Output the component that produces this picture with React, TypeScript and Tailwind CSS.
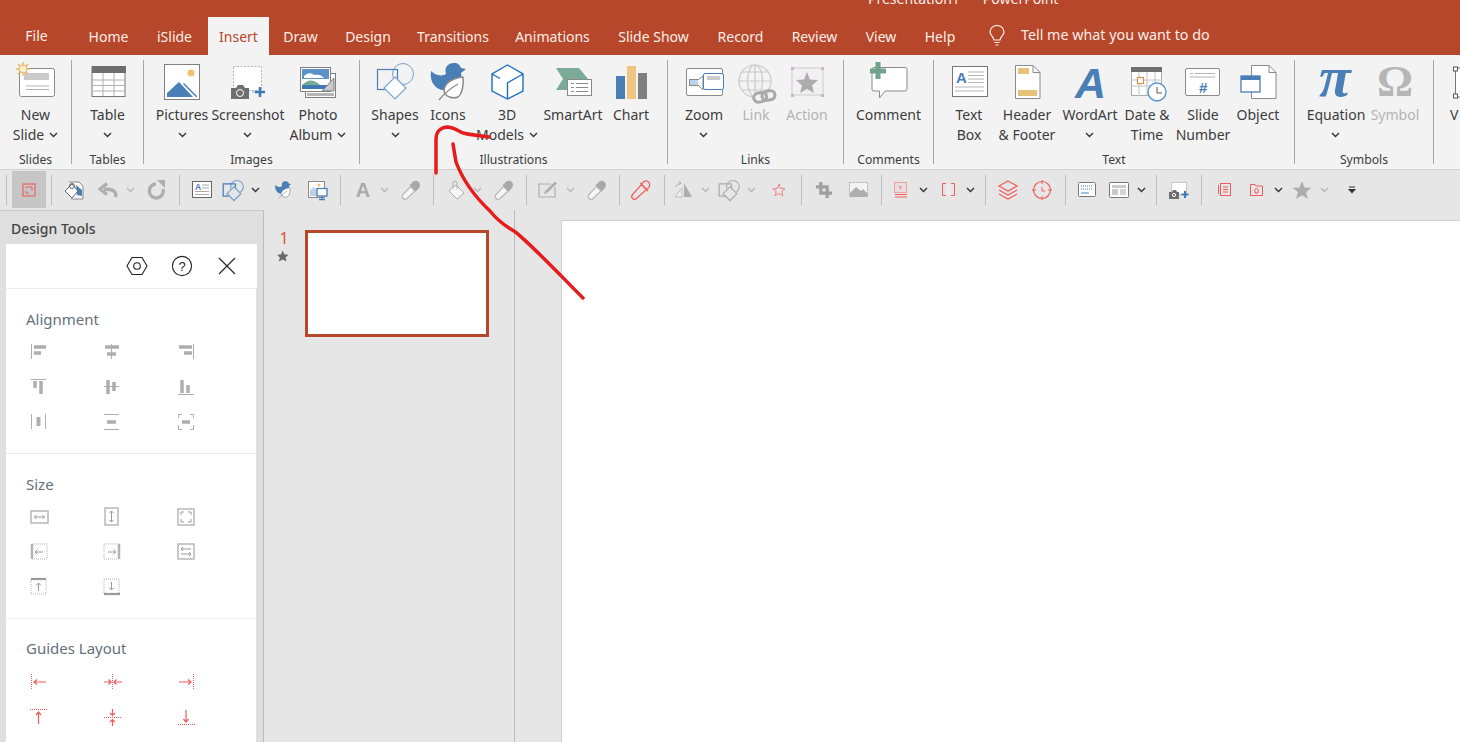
import type { ReactNode } from "react";

const FONT = "font-['Noto_Sans','Open_Sans',sans-serif]";
const BLUE = "#4a7eb7";
const GREY = "#8a8a8a";
const RED = "#f25b5b";
const LIGHT = "#aeaeae";

function Big({ children }: { children: ReactNode }) {
  return (
    <svg width="44" height="45" viewBox="0 0 44 45" className="block overflow-visible">
      {children}
    </svg>
  );
}

function Ic({ children }: { children: ReactNode }) {
  return (
    <svg width="20" height="20" viewBox="0 0 20 20" className="block overflow-visible">
      {children}
    </svg>
  );
}

function Sq({ children }: { children: ReactNode }) {
  return (
    <svg width="16" height="16" viewBox="0 0 16 16" className="block overflow-visible" fill="none">
      {children}
    </svg>
  );
}

function Chev({ dark = false }: { dark?: boolean }) {
  return (
    <svg width="9" height="6" viewBox="0 0 9 6" className="block">
      <path d="M1 1 L4.5 4.5 L8 1" fill="none" stroke={dark ? "#333" : "#b8b8b8"} strokeWidth="1.4" />
    </svg>
  );
}

const NewSlideIcon = () => (
  <Big>
    <rect x="5.5" y="8.5" width="35" height="28" rx="2" fill="#fff" stroke={GREY} />
    <rect x="10" y="13" width="25" height="7" fill="#cbcbcb" />
    <path d="M12 26 H35 M12 29.5 H35" stroke="#b5b5b5" />
    <path d="M9 2 V16 M2 9 H16 M4 4 L14 14 M14 4 L4 14" stroke="#eab75f" strokeWidth="1.3" />
    <circle cx="9" cy="9" r="4" fill="#fbeed0" stroke="#eab75f" />
  </Big>
);
const TableIcon = () => (
  <Big>
    <rect x="6" y="6.5" width="33" height="30" fill="#fff" stroke="#777" />
    <rect x="6" y="6" width="34" height="7" fill="#6e6e6e" />
    <path d="M6 20 H39 M6 25.5 H39 M6 31 H39 M17 13 V36 M28 13 V36" stroke="#b0b0b0" />
  </Big>
);
const PicturesIcon = () => (
  <Big>
    <rect x="4.5" y="4.5" width="35" height="35" fill="#fff" stroke="#808080" />
    <circle cx="31" cy="13" r="3.5" fill="#eec272" />
    <path d="M7 37 V33 L19 22 L33 37 Z M24 23 L37 36 V37 L36 37 L23 24 Z" fill={BLUE} />
  </Big>
);
const ScreenshotIcon = () => (
  <Big>
    <rect x="7.5" y="6.5" width="28" height="24" fill="#fff" stroke="#b5b5b5" strokeDasharray="2 1.5" />
    <path d="M5 28 H10 L12 25 H17 L19 28 H23 V39 H5 Z" fill="#6f6f6f" />
    <circle cx="14" cy="33" r="3.5" fill="#6f6f6f" stroke="#fff" />
    <path d="M26 32 H30" stroke="#9ab6d4" />
    <path d="M34 27 V37 M29 32 H39" stroke="#3f78b5" strokeWidth="2.6" />
  </Big>
);
const PhotoIcon = () => (
  <Big>
    <rect x="9.5" y="13.5" width="30" height="24" fill="#fff" stroke="#808080" />
    <rect x="11" y="33" width="27" height="3" fill="#b5b5b5" />
    <rect x="4.5" y="7.5" width="30" height="24" fill="#fff" stroke="#808080" />
    <rect x="6" y="9" width="27" height="10" fill="#5b93c9" />
    <path d="M8 16 C12 12 16 13 18 15 C22 14 26 15 28 18 H8 Z" fill="#fff" />
    <path d="M6 25 C12 19 18 19 24 25 Z" fill="#7aab98" />
    <rect x="6" y="25" width="27" height="4" fill="#3f78b5" />
    <path d="M26 31 L38 18 V31 Z" fill="#c8c8c8" stroke="#808080" />
  </Big>
);
function ShapesShape({ c, d }: { c: string; d: string }) {
  return (
    <>
      <circle cx="30" cy="14" r="10.5" fill="none" stroke={d} />
      <rect x="4.5" y="9.5" width="20" height="20" fill="#fff" fillOpacity="0.01" stroke={c} strokeWidth="1.2" />
      <path d="M22 17 L33 28 L22 39 L11 28 Z" fill="#fff" stroke={d} strokeWidth="1.2" />
    </>
  );
}
const ShapesIcon = () => (
  <Big>
    <ShapesShape c={BLUE} d="#7ba3cd" />
  </Big>
);
const BirdLeaf = () => (
  <g>
    <path d="M5 11 C9 15 15 17 20 14 C18 7 22 3 28 3 C32 3 34 5 35 8 L40 9 L35 13 C37 19 30 27 22 30 C12 32 3 24 5 11Z" fill={BLUE} />
    <path d="M37 17 C27 18 18 23 18 31 C19 37 27 39 32 37 C36 34 38 25 37 17Z" fill="#fff" stroke={GREY} strokeWidth="1.5" />
    <path d="M13 40 C18 34 25 28 32 24" fill="none" stroke={GREY} strokeWidth="1.3" />
  </g>
);
const IconsIcon = () => (
  <Big>
    <BirdLeaf />
  </Big>
);
const CubeIcon = () => (
  <Big>
    <path d="M22.5 5 L38 14 V31 L22.5 39 L7 31 V14 Z M7 14 L15 18.5 M22 23 L38 14 M22.5 23 V39" fill="#fff" stroke="#1f6fc0" strokeWidth="1.4" />
  </Big>
);
const SmartArtIcon = () => (
  <Big>
    <path d="M5 8 H28 L37 19 L28 30 H5 L12 19 Z" fill="#7aab98" />
    <rect x="16.5" y="19.5" width="24" height="16" fill="#fff" stroke={GREY} />
    <path d="M20 23.5 H23 M25 23.5 H37 M20 27.5 H23 M25 27.5 H37 M20 31.5 H23 M25 31.5 H37" stroke={GREY} />
  </Big>
);
const ChartIcon = () => (
  <Big>
    <rect x="7" y="16" width="9" height="23" fill={BLUE} />
    <rect x="18" y="6" width="9" height="33" fill="#eec67f" />
    <rect x="29" y="13" width="9" height="26" fill="#7f7f7f" />
  </Big>
);
const ZoomIcon = () => (
  <Big>
    <rect x="4.5" y="8.5" width="36" height="27" rx="1.5" fill="#fff" stroke={GREY} />
    <rect x="7.5" y="19.5" width="9" height="6" fill="#bcd4ea" stroke={GREY} />
    <path d="M16 20 L21 16 V30 L16 25" fill="#fff" stroke={GREY} />
    <rect x="21.5" y="13.5" width="20" height="16" rx="1.5" fill="#fff" stroke={BLUE} />
    <rect x="25" y="16" width="13" height="4" fill="#cbcbcb" />
  </Big>
);
const LinkIcon = () => (
  <Big>
    <g fill="none" stroke="#c9c9c9" strokeWidth="1.2">
      <circle cx="21" cy="21" r="16" />
      <ellipse cx="21" cy="21" rx="7.5" ry="16" />
      <path d="M21 5 V37 M5 21 H37 M8 12 H34 M8 30 H34" />
    </g>
    <g transform="rotate(-12 30 36)" fill="#f3f3f3" stroke="#a9a9a9" strokeWidth="3">
      <rect x="19.5" y="32" width="13" height="9" rx="4.5" />
      <rect x="28" y="32" width="13" height="9" rx="4.5" fill="none" />
    </g>
  </Big>
);
const StarPath = "M21 12 L24 19.5 L32 20 L26 25.5 L28 33 L21 29 L14 33 L16 25.5 L10 20 L18 19.5 Z";
const ActionIcon = () => (
  <Big>
    <rect x="7" y="8" width="31" height="27" fill="#f3f0f3" stroke="#cfc8cf" />
    <path d={StarPath} fill="#adadad" transform="translate(1 0)" />
    <path d="M6 7 h3 v3 h-3z M36 7 h3 v3 h-3z M6 34 h3 v3 h-3z M36 34 h3 v3 h-3z" fill="#bdbdbd" />
  </Big>
);
const CommentIcon = () => (
  <Big>
    <path d="M7 7.5 H38 a2 2 0 0 1 2 2 V29 a2 2 0 0 1 -2 2 H18 L12.5 38 V31 H7 a2 2 0 0 1 -2 -2 V9.5 a2 2 0 0 1 2 -2 Z" fill="#fff" stroke={GREY} />
    <path d="M11 2 V19 M3 11 H19" stroke="#6fa38f" strokeWidth="5" />
  </Big>
);
const TextBoxIcon = () => (
  <Big>
    <rect x="5.5" y="6.5" width="35" height="30" fill="#fff" stroke="#777" />
    <text x="9" y="23" fontSize="15" fontWeight="700" fill={BLUE} fontFamily="'Liberation Sans',sans-serif">A</text>
    <path d="M21 12 H37 M21 15.5 H37 M21 19 H37 M21 22.5 H37 M8 27 H37 M8 31 H37" stroke="#b5b5b5" />
  </Big>
);
const HeaderIcon = () => (
  <Big>
    <path d="M10.5 5.5 H28 L35 12.5 V38.5 H10.5 Z" fill="#fff" stroke={GREY} />
    <path d="M28 5.5 V12.5 H35" fill="none" stroke={GREY} />
    <rect x="13" y="8" width="11" height="6" fill="#e9c27a" />
    <rect x="13" y="30" width="19" height="6" fill="#e9c27a" />
  </Big>
);
const WordArtIcon = () => (
  <Big>
    <text x="7" y="38" fontSize="43" fontWeight="700" fontStyle="italic" fill={BLUE} fontFamily="'Liberation Sans',sans-serif">A</text>
  </Big>
);
const DateIcon = () => (
  <Big>
    <rect x="6.5" y="7.5" width="30" height="28" fill="#fff" stroke="#aaa" />
    <rect x="6" y="7" width="31" height="5" fill="#6e6e6e" />
    <path d="M6 20 H37 M6 26 H37 M14 12 V36 M22 12 V36 M30 12 V36" stroke="#c0c0c0" />
    <rect x="12.5" y="17.5" width="6" height="6" fill="#fff" stroke="#d68f4f" strokeWidth="1.2" />
    <circle cx="32" cy="32" r="9" fill="#fff" stroke="#5a93cc" strokeWidth="1.4" />
    <path d="M32 27 V33 H37" fill="none" stroke="#555" />
  </Big>
);
const SlideNumIcon = () => (
  <Big>
    <rect x="4.5" y="8.5" width="34" height="27" rx="1.5" fill="#fff" stroke={GREY} />
    <path d="M9 13.5 H12 M14 13.5 H34 M9 17 H34" stroke="#b5b5b5" />
    <text x="18" y="33" fontSize="15" fontWeight="700" fill={BLUE} fontFamily="'Liberation Sans',sans-serif">#</text>
  </Big>
);
const ObjectIcon = () => (
  <Big>
    <path d="M15.5 5.5 H33 L40 12.5 V38.5 H15.5 Z" fill="#fff" stroke={GREY} />
    <path d="M33 5.5 V12.5 H40" fill="none" stroke={GREY} />
    <rect x="5" y="16" width="19" height="16" fill="#fff" stroke={BLUE} strokeWidth="1.3" />
    <rect x="5" y="16" width="19" height="4" fill={BLUE} />
  </Big>
);
const PiIcon = () => (
  <Big>
    <text x="5" y="36" fontSize="58" fontWeight="700" fontStyle="italic" fill={BLUE} fontFamily="'Liberation Serif',serif">π</text>
  </Big>
);
const OmegaIcon = () => (
  <Big>
    <text x="4" y="36" fontSize="45" fontWeight="700" fill="#b6b6b6" fontFamily="'Liberation Serif',serif">Ω</text>
  </Big>
);
const VideoIcon = () => (
  <Big>
    <rect x="22.5" y="8" width="30" height="29" fill="#fff" stroke="#777" />
    <rect x="20.5" y="7" width="4" height="4" fill="#fff" stroke="#555" />
    <rect x="20.5" y="34" width="4" height="4" fill="#fff" stroke="#555" />
  </Big>
);

type Btn = {
  w: string;
  icon: ReactNode;
  lines: string[];
  chev?: "inline" | "below";
  off?: boolean;
};

function RibbonBtn({ w, icon, lines, chev, off }: Btn) {
  return (
    <div className={`${w} flex shrink-0 flex-col items-center`}>
      <div className="flex h-[45px] justify-center">{icon}</div>
      <div className={`flex flex-col items-center whitespace-nowrap text-[14px] leading-5 ${off ? "text-[#b4b4b4]" : "text-[#3c3c3c]"}`}>
        {lines.map((l, i) => (
          <div key={l} className="flex h-5 items-center gap-[5px]">
            {l}
            {chev === "inline" && i === lines.length - 1 && <Chev dark />}
          </div>
        ))}
        {chev === "below" && (
          <div className="flex h-5 items-center">
            <Chev dark />
          </div>
        )}
      </div>
    </div>
  );
}

function Group({ label, w, pad, items }: { label: string; w: string; pad: string; items: Btn[] }) {
  return (
    <>
      <div className={`${w} flex shrink-0 flex-col pt-[5px]`}>
        <div className={`flex h-[91px] ${pad}`}>
          {items.map((b) => (
            <RibbonBtn key={b.lines.join()} {...b} />
          ))}
        </div>
        <div className="h-[18px] whitespace-nowrap text-center text-[12.2px] leading-[18px] text-[#3c3c3c]">{label}</div>
      </div>
      <div className="h-[104px] w-px shrink-0 self-center bg-[#a6a6a6]" />
    </>
  );
}

function Ribbon() {
  return (
    <div className="flex h-[114px] bg-[#f3f3f3]">
      <Group label="Slides" w="w-[71px]" pad="" items={[{ w: "w-[71px]", icon: <NewSlideIcon />, lines: ["New", "Slide"], chev: "inline" }]} />
      <Group label="Tables" w="w-[71px]" pad="" items={[{ w: "w-[71px]", icon: <TableIcon />, lines: ["Table"], chev: "below" }]} />
      <Group
        label="Images"
        w="w-[215px]"
        pad="pl-[11px]"
        items={[
          { w: "w-[54px]", icon: <PicturesIcon />, lines: ["Pictures"], chev: "below" },
          { w: "w-[78px]", icon: <ScreenshotIcon />, lines: ["Screenshot"], chev: "below" },
          { w: "w-[62px]", icon: <PhotoIcon />, lines: ["Photo", "Album"], chev: "inline" },
        ]}
      />
      <Group
        label="Illustrations"
        w="w-[307px]"
        pad="pl-[11px]"
        items={[
          { w: "w-[48px]", icon: <ShapesIcon />, lines: ["Shapes"], chev: "below" },
          { w: "w-[58px]", icon: <IconsIcon />, lines: ["Icons"] },
          { w: "w-[60px]", icon: <CubeIcon />, lines: ["3D", "Models"], chev: "inline" },
          { w: "w-[72px]", icon: <SmartArtIcon />, lines: ["SmartArt"] },
          { w: "w-[44px]", icon: <ChartIcon />, lines: ["Chart"] },
        ]}
      />
      <Group
        label="Links"
        w="w-[175px]"
        pad="pl-[12px]"
        items={[
          { w: "w-[48px]", icon: <ZoomIcon />, lines: ["Zoom"], chev: "below" },
          { w: "w-[56px]", icon: <LinkIcon />, lines: ["Link"], off: true },
          { w: "w-[46px]", icon: <ActionIcon />, lines: ["Action"], off: true },
        ]}
      />
      <Group label="Comments" w="w-[89px]" pad="" items={[{ w: "w-[89px]", icon: <CommentIcon />, lines: ["Comment"] }]} />
      <Group
        label="Text"
        w="w-[360px]"
        pad="pl-[11px]"
        items={[
          { w: "w-[48px]", icon: <TextBoxIcon />, lines: ["Text", "Box"] },
          { w: "w-[68px]", icon: <HeaderIcon />, lines: ["Header", "& Footer"] },
          { w: "w-[58px]", icon: <WordArtIcon />, lines: ["WordArt"], chev: "below" },
          { w: "w-[56px]", icon: <DateIcon />, lines: ["Date &", "Time"] },
          { w: "w-[56px]", icon: <SlideNumIcon />, lines: ["Slide", "Number"] },
          { w: "w-[54px]", icon: <ObjectIcon />, lines: ["Object"] },
        ]}
      />
      <Group
        label="Symbols"
        w="w-[138px]"
        pad="pl-[11px]"
        items={[
          { w: "w-[60px]", icon: <PiIcon />, lines: ["Equation"], chev: "below" },
          { w: "w-[58px]", icon: <OmegaIcon />, lines: ["Symbol"], off: true },
        ]}
      />
      <div className="flex-1 overflow-hidden pt-[5px]">
        <div className="ml-[-1px] flex w-[60px] flex-col items-start">
          <div className="h-[45px]">
            <VideoIcon />
          </div>
          <div className="ml-[17px] text-[14px] leading-5 text-[#3c3c3c]">V</div>
        </div>
      </div>
    </div>
  );
}

const Dropper = ({ c = LIGHT }: { c?: string }) =>
  c === LIGHT ? (
    <Ic>
      <path d="M9.5 6.5 L14 11 L5.5 19 C4.5 19.5 3 19.5 2 18.5 C1 17.5 1 16 1.5 15 Z" fill="#f6f6f6" stroke="#b4b4b4" strokeWidth="1.1" />
      <path d="M8.5 5 L10.5 3.5 C12 .8 15 -.2 17.5 1.7 C20 4 19 7.5 16.5 9.5 L15 11.5 Z" fill="#a8a8a8" />
    </Ic>
  ) : (
    <Ic>
      <path d="M10.5 4.5 L15.5 9.5 L6 18 C4.5 19.5 2.5 19.5 1.5 18.5 C.5 17.5 .5 15.5 2 14 Z" fill="none" stroke={RED} strokeWidth="1.2" />
      <path d="M11 4 C12 .8 15.5 0 17.5 2 C19.5 4 19 7.5 16 9 M9 3 L17 11" fill="none" stroke={RED} strokeWidth="1.2" />
    </Ic>
  );
const ShapesSmall = ({ c, d }: { c: string; d: string }) => (
  <svg width="22" height="22" viewBox="0 0 44 45" className="block overflow-visible">
    <circle cx="30" cy="16" r="13" fill="none" stroke={d} strokeWidth="2.4" />
    <rect x="2" y="10" width="25" height="25" fill="none" stroke={c} strokeWidth="2.6" />
    <path d="M24 16 L38 30 L24 44 L10 30 Z" fill="#e6e6e6" stroke={d} strokeWidth="2.6" />
  </svg>
);
const StarSolid = () => (
  <svg width="20" height="20" viewBox="0 0 20 20" className="block">
    <path d="M10 1 L12.5 7.5 L19.5 7.8 L14 12.2 L16 19 L10 15.2 L4 19 L6 12.2 L.5 7.8 L7.5 7.5 Z" fill="#adadad" />
  </svg>
);

function Sep() {
  return <div className="h-[30px] w-px shrink-0 self-center bg-[#bdbdbd]" />;
}

function Slot({ w, children }: { w: string; children: ReactNode }) {
  return <div className={`${w} flex h-full shrink-0 items-center justify-center`}>{children}</div>;
}

function Toolbar() {
  return (
    <div className="flex h-[41px] items-stretch border-t border-[#d2d2d2] bg-[#e6e6e6] pl-[6px] pb-px">
      <Sep />
      <div className="mx-[5px] my-[1px] flex w-[34px] shrink-0 items-center justify-center bg-[#c6c6c6]">
        <Ic>
          <rect x="4" y="4" width="12" height="12" fill="none" stroke={RED} strokeWidth="1.1" />
          <path d="M7 8 V7 H13 V11 M7 11 V13 H10" fill="none" stroke={RED} />
        </Ic>
      </div>
      <Sep />
      <Slot w="w-[44px]">
        <Ic>
          <path d="M5 2 H15 L19 6 V19 H7" fill="#f7f7f7" stroke={GREY} />
          <path d="M12 5 L18 10 V16 L13 15 Z" fill={BLUE} />
          <path d="M8 4 L14 11 L8 18 L1 11 Z" fill="#fff" stroke="#666" />
          <circle cx="8" cy="6" r="2.5" fill="none" stroke="#666" />
        </Ic>
      </Slot>
      <Slot w="w-[26px]">
        <Ic>
          <path d="M16.5 17 C18 11 13 9 5 9" fill="none" stroke={LIGHT} strokeWidth="3.4" />
          <path d="M8 3.5 L1 9 L8 14.5" fill="none" stroke={LIGHT} strokeWidth="3.2" />
        </Ic>
      </Slot>
      <Slot w="w-[16px]">
        <Chev />
      </Slot>
      <Slot w="w-[38px] mr-[3px]">
        <Ic>
          <path d="M9 4 A7 7 0 1 0 16 9" fill="none" stroke={LIGHT} strokeWidth="3.4" />
          <path d="M10 0 H18 V8 Z" fill={LIGHT} />
        </Ic>
      </Slot>
      <Sep />
      <Slot w="w-[43px]">
        <Ic>
          <rect x=".5" y="1.5" width="19" height="16" fill="#fff" stroke="#666" />
          <text x="3" y="10" fontSize="8.5" fontWeight="700" fill={BLUE} fontFamily="'Liberation Sans',sans-serif">A</text>
          <path d="M10 5 H17 M10 8 H17 M3 11.5 H17 M3 14.5 H17" stroke="#aaa" />
        </Ic>
      </Slot>
      <Slot w="w-[20px]">
        <ShapesSmall c={BLUE} d="#7ba3cd" />
      </Slot>
      <Slot w="w-[24px]">
        <Chev dark />
      </Slot>
      <Slot w="w-[32px]">
        <svg width="20" height="20" viewBox="0 0 44 44" className="block overflow-visible">
          <BirdLeaf />
        </svg>
      </Slot>
      <Slot w="w-[38px] mr-[3px]">
        <Ic>
          <rect x=".5" y="1.5" width="16" height="16" fill="#fff" stroke={GREY} />
          <circle cx="11" cy="5" r="1.5" fill="#eec272" />
          <path d="M2 16 V10 L6 7 L11 13 V16 Z" fill="#bcd0e5" />
          <rect x="9" y="8.5" width="10" height="7.5" fill="#fff" stroke={BLUE} strokeWidth="1.3" />
          <path d="M14 16 V19 M11 19.5 H17" stroke={BLUE} strokeWidth="1.3" />
        </Ic>
      </Slot>
      <Sep />
      <Slot w="ml-[12px] w-[20px]">
        <span className="font-['Liberation_Sans',sans-serif] text-[20px] font-bold leading-none text-[#a9a9a9]">A</span>
      </Slot>
      <Slot w="w-[22px]">
        <Chev />
      </Slot>
      <Slot w="w-[32px] mr-[6px]">
        <Dropper />
      </Slot>
      <Sep />
      <Slot w="ml-[14px] w-[18px]">
        <Ic>
          <path d="M9 5 L17 13 L10 19 L2 11 Z" fill="#f7f7f7" stroke={LIGHT} />
          <path d="M6 8 V3 A2 2 0 0 1 10 3 V9" fill="none" stroke={LIGHT} />
        </Ic>
      </Slot>
      <Slot w="w-[22px]">
        <Chev />
      </Slot>
      <Slot w="w-[32px] mr-[6px]">
        <Dropper />
      </Slot>
      <Sep />
      <Slot w="ml-[12px] w-[18px]">
        <Ic>
          <path d="M17 7 V17 H1 V4 H13" fill="none" stroke={LIGHT} strokeWidth="1.2" />
          <path d="M6 14 L7 11 L17 1.5 L19 3.5 L9 13 Z" fill={LIGHT} />
        </Ic>
      </Slot>
      <Slot w="w-[26px]">
        <Chev />
      </Slot>
      <Slot w="w-[28px] mr-[8px]">
        <Dropper />
      </Slot>
      <Sep />
      <Slot w="w-[42px] mr-[2px]">
        <Dropper c={RED} />
      </Slot>
      <Sep />
      <Slot w="ml-[10px] w-[18px]">
        <Ic>
          <path d="M10 3 L18 17 H10 Z" fill={LIGHT} />
          <path d="M8 8 L1 17 H8 Z" fill="#f0f0f0" stroke="#c0c0c0" />
          <path d="M2 7 C3 4 5 3 7 3 M5 1 L7 3 L5 5" fill="none" stroke="#b0b0b0" />
        </Ic>
      </Slot>
      <Slot w="w-[24px]">
        <Chev />
      </Slot>
      <Slot w="w-[24px]">
        <ShapesSmall c={LIGHT} d={LIGHT} />
      </Slot>
      <Slot w="w-[20px]">
        <Chev />
      </Slot>
      <Slot w="w-[36px] mr-[4px]">
        <svg width="14" height="14" viewBox="0 0 20 20" className="block">
          <path d="M10 2 L12.5 8 L18.5 8.2 L14 12.2 L15.5 18 L10 15 L4.5 18 L6 12.2 L1.5 8.2 L7.5 8 Z" fill="none" stroke={RED} strokeWidth="1.4" strokeDasharray="3 1" />
        </svg>
      </Slot>
      <Sep />
      <Slot w="w-[44px]">
        <svg width="18" height="18" viewBox="0 0 20 20" className="block">
          <path d="M6.5 1 V13.5 H19 M1 6.5 H13.5 V19" fill="none" stroke="#a0a0a0" strokeWidth="3.6" />
        </svg>
      </Slot>
      <Slot w="w-[26px] mr-[9px]">
        <Ic>
          <rect x=".5" y="2.5" width="18" height="14" fill="#f4f4f4" stroke={LIGHT} strokeDasharray="2 1" />
          <path d="M1 17 V13 L7 7 L12 11 L14 9 L19 14 V17 Z" fill={LIGHT} />
        </Ic>
      </Slot>
      <Sep />
      <Slot w="ml-[12px] w-[14px]">
        <svg width="14" height="16" viewBox="0 0 14 16" className="block">
          <rect x=".5" y=".5" width="12" height="10" fill="#e9dede" stroke="#eda0a0" />
          <path d="M5 4 L7 5.5 L6 7 M1 15 H13" fill="none" stroke={RED} />
          <path d="M1 12.5 H13" stroke={RED} />
        </svg>
      </Slot>
      <Slot w="w-[30px]">
        <Chev dark />
      </Slot>
      <Slot w="w-[20px]">
        <svg width="13" height="13" viewBox="0 0 13 13" className="block">
          <rect x="4" y="1" width="5" height="11" fill="#ececec" />
          <path d="M4 .5 H.5 V12.5 H4 M9 .5 H12.5 V12.5 H9" fill="none" stroke={RED} />
        </svg>
      </Slot>
      <Slot w="w-[24px] mr-[3px]">
        <Chev dark />
      </Slot>
      <Sep />
      <Slot w="w-[44px]">
        <Ic>
          <path d="M10 1 L19 6 L10 11 L1 6 Z M1 10 L10 15 L19 10 M1 14 L10 19 L19 14" fill="none" stroke={RED} strokeWidth="1.2" />
        </Ic>
      </Slot>
      <Slot w="w-[24px] mr-[11px]">
        <Ic>
          <circle cx="10" cy="10" r="8.5" fill="none" stroke={RED} strokeWidth="1.2" />
          <path d="M10 0 V4 M10 16 V20 M0 10 H4 M16 10 H20 M10 7 V11 H13" fill="none" stroke={RED} />
        </Ic>
      </Slot>
      <Sep />
      <Slot w="w-[43px]">
        <Ic>
          <rect x=".5" y="2.5" width="17" height="14" rx="1" fill="#fff" stroke="#777" />
          <path d="M3 6 H15 M3 9 H15" stroke={BLUE} strokeDasharray="1 1" />
          <path d="M3 13 H11" stroke={BLUE} />
        </Ic>
      </Slot>
      <Slot w="w-[20px]">
        <Ic>
          <rect x=".5" y="2.5" width="19" height="15" rx="1" fill="#fff" stroke="#777" />
          <rect x="3" y="5" width="14" height="3" fill="#cbcbcb" />
          <rect x="3" y="9" width="6" height="6" fill="#cbcbcb" />
          <path d="M11 10 H17 M11 12 H17 M11 14 H17" stroke="#aaa" />
        </Ic>
      </Slot>
      <Slot w="w-[24px] mr-[3px]">
        <Chev dark />
      </Slot>
      <Sep />
      <Slot w="w-[44px]">
        <Ic>
          <rect x="2.5" y="2.5" width="15" height="12" fill="#fff" stroke="#999" strokeDasharray="1 1" />
          <path d="M0 12 H3 L4 10 H7 L8 12 H10 V19 H0 Z" fill="#6f6f6f" />
          <circle cx="5" cy="15" r="1.6" fill="#6f6f6f" stroke="#fff" />
          <path d="M16 11 V18 M12.5 14.5 H19.5" stroke="#3f78b5" strokeWidth="2" />
        </Ic>
      </Slot>
      <Sep />
      <Slot w="w-[44px]">
        <svg width="13" height="13" viewBox="0 0 13 13" className="block overflow-visible">
          <rect x="2.5" y=".5" width="10" height="12" fill="none" stroke={RED} />
          <path d="M.5 2 V11 M5 4 H10 M5 6.5 H10 M5 9 H10" stroke={RED} />
        </svg>
      </Slot>
      <Slot w="w-[20px]">
        <svg width="13" height="13" viewBox="0 0 13 13" className="block">
          <path d="M.5 1.5 H5 L6 3 H12.5 V12.5 H.5 Z" fill="none" stroke={RED} />
          <path d="M4 8 L6.5 5 L9 8 M5 8 V10 H8 V8" fill="none" stroke={RED} />
        </svg>
      </Slot>
      <Slot w="w-[24px]">
        <Chev dark />
      </Slot>
      <Slot w="w-[24px]">
        <StarSolid />
      </Slot>
      <Slot w="w-[20px]">
        <Chev />
      </Slot>
      <Slot w="w-[36px]">
        <svg width="8" height="8" viewBox="0 0 8 8" className="block">
          <path d="M1 1 H7" stroke="#333" />
          <path d="M0 3 H8 L4 7.5 Z" fill="#333" />
        </svg>
      </Slot>
    </div>
  );
}

const ALIGN: ReactNode[] = [
  <>
    <path d="M.5 0 V15" stroke={LIGHT} />
    <path d="M3 3 H15 M3 9 H10" stroke={LIGHT} strokeWidth="3.5" />
  </>,
  <>
    <path d="M7.5 0 V15" stroke={LIGHT} />
    <path d="M1 3 H15 M3 10 H12" stroke={LIGHT} strokeWidth="3.5" />
  </>,
  <>
    <path d="M15.5 0 V15" stroke={LIGHT} />
    <path d="M1 3 H14 M6 9 H14" stroke={LIGHT} strokeWidth="3.5" />
  </>,
  <>
    <path d="M0 .5 H15" stroke={LIGHT} />
    <path d="M4 2 V9 M10 2 V15" stroke={LIGHT} strokeWidth="3.5" />
  </>,
  <>
    <path d="M0 7.5 H15" stroke={LIGHT} />
    <path d="M4 1 V15 M10 3 V12" stroke={LIGHT} strokeWidth="3.5" />
  </>,
  <>
    <path d="M0 15.5 H16" stroke={LIGHT} />
    <path d="M4 1 V14 M10 6 V14" stroke={LIGHT} strokeWidth="3.5" />
  </>,
  <>
    <path d="M.5 0 V15 M14.5 0 V15" stroke={LIGHT} />
    <path d="M7.5 3 V12" stroke={LIGHT} strokeWidth="4" />
  </>,
  <>
    <path d="M0 .5 H15 M0 15.5 H15" stroke={LIGHT} />
    <path d="M3 8 H12" stroke={LIGHT} strokeWidth="3.5" />
  </>,
  <>
    <path d="M.5 4 V.5 H4 M12 .5 H15.5 V4 M.5 11 V15.5 H4 M12 15.5 H15.5 V11" stroke={LIGHT} />
    <path d="M4 8 H12" stroke={LIGHT} strokeWidth="3.5" />
  </>,
];

const BOX = "#b3b3b3";
const SIZE: ReactNode[] = [
  <>
    <rect x="0" y="2" width="17" height="12" stroke={BOX} strokeWidth="1.4" />
    <path d="M3.5 8 H13.5 M5.5 6 L3.5 8 L5.5 10 M11.5 6 L13.5 8 L11.5 10" stroke="#9a9a9a" />
  </>,
  <>
    <rect x="1" y="-1" width="13" height="17" stroke={BOX} strokeWidth="1.4" />
    <path d="M7.5 2 V13 M5.5 4 L7.5 2 L9.5 4 M5.5 11 L7.5 13 L9.5 11" stroke="#9a9a9a" />
  </>,
  <>
    <rect x="0" y="0" width="16" height="16" stroke={BOX} strokeWidth="1.4" />
    <path d="M3 6 V3 H6 M10 3 H13 V6 M3 10 V13 H6 M10 13 H13 V10" stroke="#9a9a9a" />
  </>,
  <>
    <rect x="1" y="0" width="15" height="15" stroke={BOX} strokeDasharray="1 1" />
    <path d="M1 0 V15" stroke={BOX} strokeWidth="2.5" />
    <path d="M4 8 H12 M6.5 5.5 L4 8 L6.5 10.5" stroke="#9a9a9a" />
  </>,
  <>
    <rect x="0" y="0" width="15" height="15" stroke={BOX} strokeDasharray="1 1" />
    <path d="M15 0 V15" stroke={BOX} strokeWidth="2.5" />
    <path d="M4 8 H12 M9.5 5.5 L12 8 L9.5 10.5" stroke="#9a9a9a" />
  </>,
  <>
    <rect x="0" y="0" width="16" height="15" stroke={BOX} strokeWidth="1.4" />
    <path d="M3 5 H13 M5 3 L3 5 L5 7 M3 10 H13 M11 8 L13 10 L11 12" stroke="#9a9a9a" />
  </>,
  <>
    <rect x="0" y="0" width="15" height="15" stroke={BOX} strokeDasharray="1 1" />
    <path d="M0 0 H15" stroke="#999" strokeWidth="2.2" />
    <path d="M7.5 12 V4 M5 6.5 L7.5 4 L10 6.5" stroke="#9a9a9a" />
  </>,
  <>
    <rect x="0" y="0" width="15" height="15" stroke={BOX} strokeDasharray="1 1" />
    <path d="M0 15 H16" stroke="#999" strokeWidth="2.2" />
    <path d="M7.5 3 V11 M5 8.5 L7.5 11 L10 8.5" stroke="#9a9a9a" />
  </>,
];

const DOT = { strokeDasharray: "1 1", stroke: RED };
const GUIDES: ReactNode[] = [
  <>
    <path d="M.5 0 V16" {...DOT} />
    <path d="M3 8 H15 M6 5.5 L3 8 L6 10.5" stroke={RED} strokeWidth="1.2" />
  </>,
  <>
    <path d="M8.5 0 V16" {...DOT} />
    <path d="M0 8 H7 M4.5 5.5 L7 8 L4.5 10.5 M10 8 H18 M12.5 5.5 L10 8 L12.5 10.5" stroke={RED} strokeWidth="1.2" />
  </>,
  <>
    <path d="M15.5 0 V16" {...DOT} />
    <path d="M1 8 H13 M10 5.5 L13 8 L10 10.5" stroke={RED} strokeWidth="1.2" />
  </>,
  <>
    <path d="M-1 .5 H16" {...DOT} />
    <path d="M7.5 3 V15 M5 6 L7.5 3 L10 6" stroke={RED} strokeWidth="1.2" />
  </>,
  <>
    <path d="M0 8.5 H17" {...DOT} />
    <path d="M8.5 0 V6.5 M6 4 L8.5 6.5 L11 4 M8.5 10.5 V17 M6 13 L8.5 10.5 L11 13" stroke={RED} strokeWidth="1.2" />
  </>,
  <>
    <path d="M0 15.5 H17" {...DOT} />
    <path d="M8 1 V13 M5.5 10 L8 13 L10.5 10" stroke={RED} strokeWidth="1.2" />
  </>,
];

function Section({ title, icons, cls, gap }: { title: string; icons: ReactNode[]; cls: string; gap: string }) {
  return (
    <div className={cls}>
      <div className="pl-5 text-[15px] leading-5 text-[#66707c]">{title}</div>
      <div className={`${gap} grid grid-cols-[73px_74px_74px] pl-[25px]`}>
        {icons.map((ic, i) => (
          <div key={i} className="flex h-[35px] items-center">
            <Sq>{ic}</Sq>
          </div>
        ))}
      </div>
    </div>
  );
}

function DesignTools() {
  return (
    <div className="flex h-[532px] w-[263px] shrink-0 flex-col overflow-hidden bg-[#dfdfdf]">
      <div className="border-t border-[#c9c9c9] pl-[11px] pt-[3px] text-[14px] font-medium leading-[30px] text-[#444]">Design Tools</div>
      <div className="ml-[6px] flex h-[44px] w-[251px] items-center justify-end gap-[23px] bg-white pr-[19px]">
        <svg width="22" height="22" viewBox="0 0 22 22" className="block">
          <path d="M6 2.5 H16 L21 11 L16 19.5 H6 L1 11 Z" fill="none" stroke="#222" strokeWidth="1.1" />
          <circle cx="11" cy="11" r="3.3" fill="none" stroke="#222" strokeWidth="1.1" />
        </svg>
        <svg width="22" height="22" viewBox="0 0 22 22" className="block">
          <circle cx="11" cy="11" r="9.6" fill="none" stroke="#222" strokeWidth="1.1" />
          <text x="11" y="15.5" textAnchor="middle" fontSize="13" fill="#222" fontFamily="'Liberation Sans',sans-serif">?</text>
        </svg>
        <svg width="22" height="22" viewBox="0 0 22 22" className="block">
          <path d="M3 3 L19 19 M19 3 L3 19" stroke="#222" strokeWidth="1.1" />
        </svg>
      </div>
      <div className="ml-[6px] w-[250px] flex-1 border-t border-[#efefef] bg-white">
        <Section title="Alignment" icons={ALIGN} cls="h-[165px] border-b border-[#e8e8e8] pt-5" gap="mt-[5px]" />
        <Section title="Size" icons={SIZE} cls="h-[165px] border-b border-[#efefef] pt-5" gap="mt-[5px]" />
        <Section title="Guides Layout" icons={GUIDES} cls="pt-[19px]" gap="mt-[6px]" />
      </div>
    </div>
  );
}

function Thumbs() {
  return (
    <div className="flex w-[252px] shrink-0 border-x border-[#bcbcbc] bg-[#e6e6e6] pl-[8px] pt-[20px]">
      <div className="mr-[13px] flex w-[20px] shrink-0 flex-col items-center">
        <div className="ml-[4px] text-[16px] leading-[17px] text-[#e0523a]">1</div>
        <svg width="14" height="14" viewBox="0 0 20 20" className="mt-[2px] block">
          <path d="M11 2 L13.5 8 L19.5 8.2 L15 12.2 L16.5 18 L11 15 L5.5 18 L7 12.2 L3 8.2 L8.5 8 Z" fill="#6a6a6a" />
        </svg>
      </div>
      <div className="h-[107px] w-[184px] border-[3px] border-[#b7472a] bg-white" />
    </div>
  );
}

const TABS = [
  ["Home", "w-[71px]"],
  ["iSlide", "w-[61px] mr-[3px]"],
  ["Insert", "w-[61px]"],
  ["Draw", "w-[63px]"],
  ["Design", "w-[72px]"],
  ["Transitions", "w-[98px]"],
  ["Animations", "w-[101px]"],
  ["Slide Show", "w-[101px]"],
  ["Record", "w-[73px]"],
  ["Review", "w-[75px]"],
  ["View", "w-[58px]"],
  ["Help", "w-[60px]"],
];

function TitleBar() {
  return (
    <div className="h-[55px] bg-[#b7472a] text-[14px] text-[#fbeee9]">
      <div className="h-[17px] overflow-hidden whitespace-nowrap pl-[868px]">
        <div className="mt-[-11px] flex gap-[23px] leading-5">
          <span>Presentation1</span>
          <span>PowerPoint</span>
        </div>
      </div>
      <div className="flex h-[38px] items-center">
        <div className="flex h-full w-[73px] items-center justify-center pb-[2px]">File</div>
        {TABS.map(([name, w]) => (
          <div
            key={name}
            className={`${w} flex h-full items-center justify-center ${name === "Insert" ? "bg-[#f3f3f3] text-[#b7472a]" : ""}`}
          >
            {name}
          </div>
        ))}
        <div className="ml-[19px] w-[32px]">
          <svg width="16" height="22" viewBox="0 0 16 22" className="block">
            <path d="M5 15 C4 11 1 10 1 7 A7 6.5 0 0 1 15 7 C15 10 12 11 11 15 Z M5.5 17.5 H10.5 M6.5 20 H9.5" fill="none" stroke="#fbeee9" strokeWidth="1.2" />
          </svg>
        </div>
        <div className="whitespace-nowrap pb-[2px] text-[14.3px]">Tell me what you want to do</div>
      </div>
    </div>
  );
}

export default function App() {
  return (
    <div className={`${FONT} relative h-[742px] w-[1460px] overflow-hidden bg-[#e6e6e6]`}>
      <TitleBar />
      <Ribbon />
      <Toolbar />
      <div className="flex h-[532px]">
        <DesignTools />
        <Thumbs />
        <div className="flex-1 pl-[46px] pt-[10px]">
          <div className="h-full border-l border-t border-[#d0d0d0] bg-white" />
        </div>
      </div>
      {/* hand drawn annotation on top of the ribbon */}
      <svg width="1460" height="742" viewBox="0 0 1460 742" className="pointer-events-none absolute inset-0" fill="none">
        <path d="M436 173 L436 140 C436 131 440 128 447 127 C454 127 458 131 463 133 C470 135 478 135 489 137" stroke="#e61c1c" strokeWidth="3.5" strokeLinecap="round" />
        <path d="M453 144 L456 162 C462 178 474 196 490 211 C498 221 505 226 514 231 C530 243 560 275 583 298" stroke="#e61c1c" strokeWidth="3.5" strokeLinecap="round" />
      </svg>
    </div>
  );
}
